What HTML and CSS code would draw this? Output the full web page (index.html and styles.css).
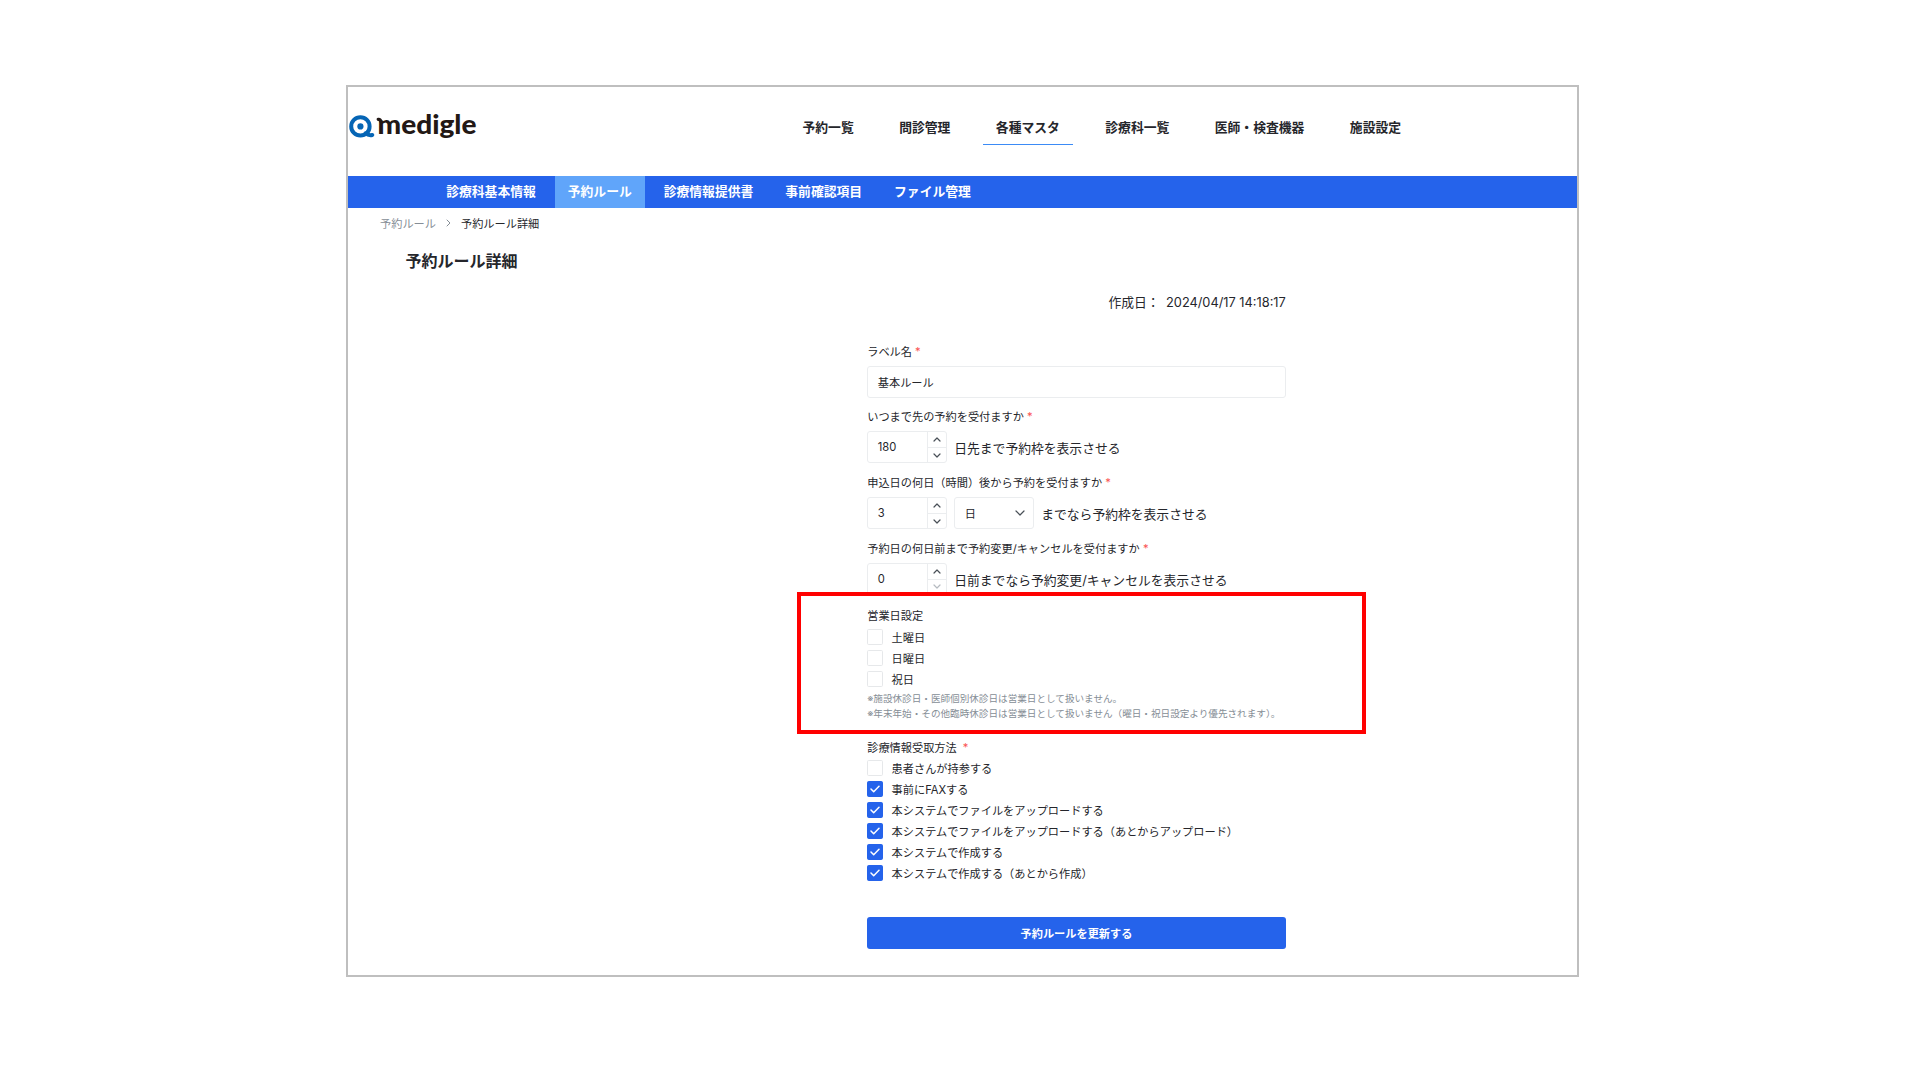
FILE: index.html
```
<!DOCTYPE html>
<html lang="ja">

<head>
  <meta charset="utf-8">
  <title>予約ルール詳細</title>
  <link rel="stylesheet" href="styles.css">
</head>

<body>
  <div class="window">
    <header class="header">
      <svg class="logo" width="130" height="32" viewBox="0 0 130 32">
        <g fill="none" stroke="#0565b5" stroke-width="4" stroke-linecap="round">
          <circle cx="12.4" cy="15.4" r="9.2"/>
          <path d="M17.5 22.3Q20.5 24.8 24.3 24"/>
        </g>
        <circle cx="12.4" cy="15.4" r="3.1" fill="#0565b5"/>
        <path d="M30.2 8.3Q32.4 8 33.2 11" fill="none" stroke="#231815" stroke-width="3.2" stroke-linecap="round"/>
        <text class="logo-text" x="29.5" y="23.2" textLength="99" lengthAdjust="spacingAndGlyphs">medigle</text>
      </svg>
      <nav class="nav">
        <a>予約一覧</a>
        <a>問診管理</a>
        <a class="active">各種マスタ</a>
        <a>診療科一覧</a>
        <a>医師・検査機器</a>
        <a>施設設定</a>
      </nav>
    </header>

    <nav class="subnav">
      <a>診療科基本情報</a>
      <a class="active">予約ルール</a>
      <a>診療情報提供書</a>
      <a>事前確認項目</a>
      <a>ファイル管理</a>
    </nav>

    <div class="crumbs">
      <a>予約ルール</a>
      <svg width="5" height="8" viewBox="0 0 5 8"><path d="M1 1l3 3-3 3"/></svg>
      <span>予約ルール詳細</span>
    </div>
    <h1 class="title">予約ルール詳細</h1>

    <form class="form">
      <div class="created"><span>作成日：</span><span>2024/04/17 14:18:17</span></div>

      <div class="field">
        <label>ラベル名 <i>*</i></label>
        <div class="input">基本ルール</div>
      </div>

      <div class="field">
        <label>いつまで先の予約を受付ますか <i>*</i></label>
        <div class="line">
          <div class="input number">180
            <div class="spin">
              <span><svg width="8" height="5" viewBox="0 0 8 5"><path d="M1 4l3-3 3 3"/></svg></span>
              <span><svg width="8" height="5" viewBox="0 0 8 5"><path d="M1 1l3 3 3-3"/></svg></span>
            </div>
          </div>
          <span>日先まで予約枠を表示させる</span>
        </div>
      </div>

      <div class="field">
        <label>申込日の何日（時間）後から予約を受付ますか <i>*</i></label>
        <div class="line">
          <div class="input number">3
            <div class="spin">
              <span><svg width="8" height="5" viewBox="0 0 8 5"><path d="M1 4l3-3 3 3"/></svg></span>
              <span><svg width="8" height="5" viewBox="0 0 8 5"><path d="M1 1l3 3 3-3"/></svg></span>
            </div>
          </div>
          <div class="input select">日
            <svg width="10" height="6" viewBox="0 0 10 6"><path d="M1 1l4 4 4-4"/></svg>
          </div>
          <span>までなら予約枠を表示させる</span>
        </div>
      </div>

      <div class="field">
        <label>予約日の何日前まで予約変更/キャンセルを受付ますか <i>*</i></label>
        <div class="line">
          <div class="input number">0
            <div class="spin">
              <span><svg width="8" height="5" viewBox="0 0 8 5"><path d="M1 4l3-3 3 3"/></svg></span>
              <span class="off"><svg width="8" height="5" viewBox="0 0 8 5"><path d="M1 1l3 3 3-3"/></svg></span>
            </div>
          </div>
          <span>日前までなら予約変更/キャンセルを表示させる</span>
        </div>
      </div>

      <div class="highlight">
        <div class="group-label">営業日設定</div>
        <div class="check"><b></b>土曜日</div>
        <div class="check"><b></b>日曜日</div>
        <div class="check"><b></b>祝日</div>
        <div class="notes">
          <p>※施設休診日・医師個別休診日は営業日として扱いません。</p>
          <p>※年末年始・その他臨時休診日は営業日として扱いません（曜日・祝日設定より優先されます）。</p>
        </div>
      </div>

      <div class="methods">
        <div class="group-label">診療情報受取方法 <i>*</i></div>
        <div class="check"><b></b>患者さんが持参する</div>
        <div class="check"><b class="on"><svg width="10" height="8" viewBox="0 0 10 8"><path d="M1 4l2.7 2.7L9 1.3"/></svg></b>事前にFAXする</div>
        <div class="check"><b class="on"><svg width="10" height="8" viewBox="0 0 10 8"><path d="M1 4l2.7 2.7L9 1.3"/></svg></b>本システムでファイルをアップロードする</div>
        <div class="check"><b class="on"><svg width="10" height="8" viewBox="0 0 10 8"><path d="M1 4l2.7 2.7L9 1.3"/></svg></b>本システムでファイルをアップロードする（あとからアップロード）</div>
        <div class="check"><b class="on"><svg width="10" height="8" viewBox="0 0 10 8"><path d="M1 4l2.7 2.7L9 1.3"/></svg></b>本システムで作成する</div>
        <div class="check"><b class="on"><svg width="10" height="8" viewBox="0 0 10 8"><path d="M1 4l2.7 2.7L9 1.3"/></svg></b>本システムで作成する（あとから作成）</div>
      </div>

      <button class="submit" type="button">予約ルールを更新する</button>
    </form>
  </div>
</body>

</html>
```
FILE: styles.css
```
* {
  box-sizing: border-box;
}

body {
  margin: 0;
  padding: 85px 0 0 346px;
  background: #fff;
  color: #25262b;
  font-family: Inter, "Noto Sans CJK JP", sans-serif;
  font-size: 11.2px;
}

svg path {
  stroke-linecap: round;
  stroke-linejoin: round;
}

.window {
  width: 1233px;
  height: 892px;
  border: 2px solid #bfbfbf;
}

.header {
  display: flex;
  align-items: flex-start;
  height: 89px;
}

.logo {
  margin-top: 24px;
  flex: none;
}

.logo-text {
  font-family: Lato, sans-serif;
  font-weight: 900;
  font-size: 26px;
  fill: #231815;
}

.nav {
  display: flex;
  gap: 19.9px;
  margin: 22.6px 0 0 311.7px;
}

.nav a {
  height: 35px;
  padding: 0 12.8px;
  border-bottom: 1.6px solid transparent;
  font-size: 12.8px;
  font-weight: 700;
  line-height: 35px;
  white-space: nowrap;
}

.nav .active {
  border-bottom-color: #3b8bf6;
}

.subnav {
  display: flex;
  gap: 6.4px;
  height: 32px;
  padding-left: 85.4px;
  background: #2563eb;
  color: #fff;
}

.subnav a {
  padding: 0 12.8px;
  font-size: 12.8px;
  font-weight: 700;
  line-height: 32px;
}

.subnav .active {
  background: #60a5fa;
}

.crumbs {
  display: flex;
  align-items: center;
  gap: 10px;
  height: 18px;
  margin: 6px 0 0 32px;
}

.crumbs a {
  color: #868e96;
}

.crumbs svg {
  fill: none;
  stroke: #868e96;
}

.title {
  height: 24px;
  margin: 17px 0 0 57.6px;
  font-size: 16px;
  line-height: 24px;
  font-weight: 700;
}

.form {
  width: 418.6px;
  margin-left: 519.2px;
}

.created {
  display: flex;
  justify-content: flex-end;
  gap: 6.4px;
  height: 20px;
  margin: 20px 0 30.5px;
  font-size: 12.8px;
  line-height: 20px;
}

.field {
  height: 65.9px;
}

.field label {
  display: block;
  height: 22px;
  line-height: 17.4px;
}

i {
  color: #fa5252;
  font-style: normal;
}

.line {
  display: flex;
  align-items: center;
  gap: 7px;
  font-size: 12.8px;
}

.input {
  display: flex;
  align-items: center;
  height: 32px;
  padding-left: 9.6px;
  border: 1px solid #ebedef;
  border-radius: 3px;
  font-size: 11.2px;
}

.number {
  justify-content: space-between;
  width: 80px;
}

.spin {
  display: flex;
  flex-direction: column;
  width: 19.5px;
  height: 30px;
  border-left: 1px solid #ebedef;
}

.spin span {
  display: flex;
  flex: 1;
  align-items: center;
  justify-content: center;
}

.spin span + span {
  border-top: 1px solid #ebedef;
}

.spin svg,
.select svg {
  fill: none;
  stroke: #495057;
  stroke-width: 1.2;
}

.spin .off svg {
  stroke: #b5bac0;
}

.select {
  justify-content: space-between;
  width: 80px;
  padding-right: 8px;
}

/* pulled out of the column so its frame runs past the form on both sides */
.highlight {
  position: relative;
  width: 569px;
  height: 142px;
  margin: -15px 0 0 -70px;
  padding: 11.3px 0 0 66px;
  border: 4px solid #f00;
}

.group-label {
  height: 21.7px;
  line-height: 18px;
}

.group-label i {
  margin-left: 3px;
}

.check {
  display: flex;
  align-items: center;
  gap: 8.4px;
  height: 16px;
  margin-bottom: 4.9px;
  white-space: nowrap;
}

.check b {
  display: flex;
  align-items: center;
  justify-content: center;
  width: 16px;
  height: 16px;
  border: 1px solid #e6e8ea;
  border-radius: 1.6px;
}

.check .on {
  background: #2563eb;
  border-color: #2563eb;
}

.check svg {
  fill: none;
  stroke: #fff;
  stroke-width: 1.5;
}

.notes {
  color: #868e96;
  font-size: 9.6px;
  line-height: 14.8px;
  white-space: nowrap;
}

.notes p {
  margin: 0;
}

.methods {
  padding-top: 4.5px;
}

.submit {
  display: block;
  width: 100%;
  height: 32px;
  margin-top: 36.3px;
  padding: 0;
  border: 0;
  border-radius: 3px;
  background: #2563eb;
  color: #fff;
  font: 700 11.2px Inter, "Noto Sans CJK JP", sans-serif;
}
```
